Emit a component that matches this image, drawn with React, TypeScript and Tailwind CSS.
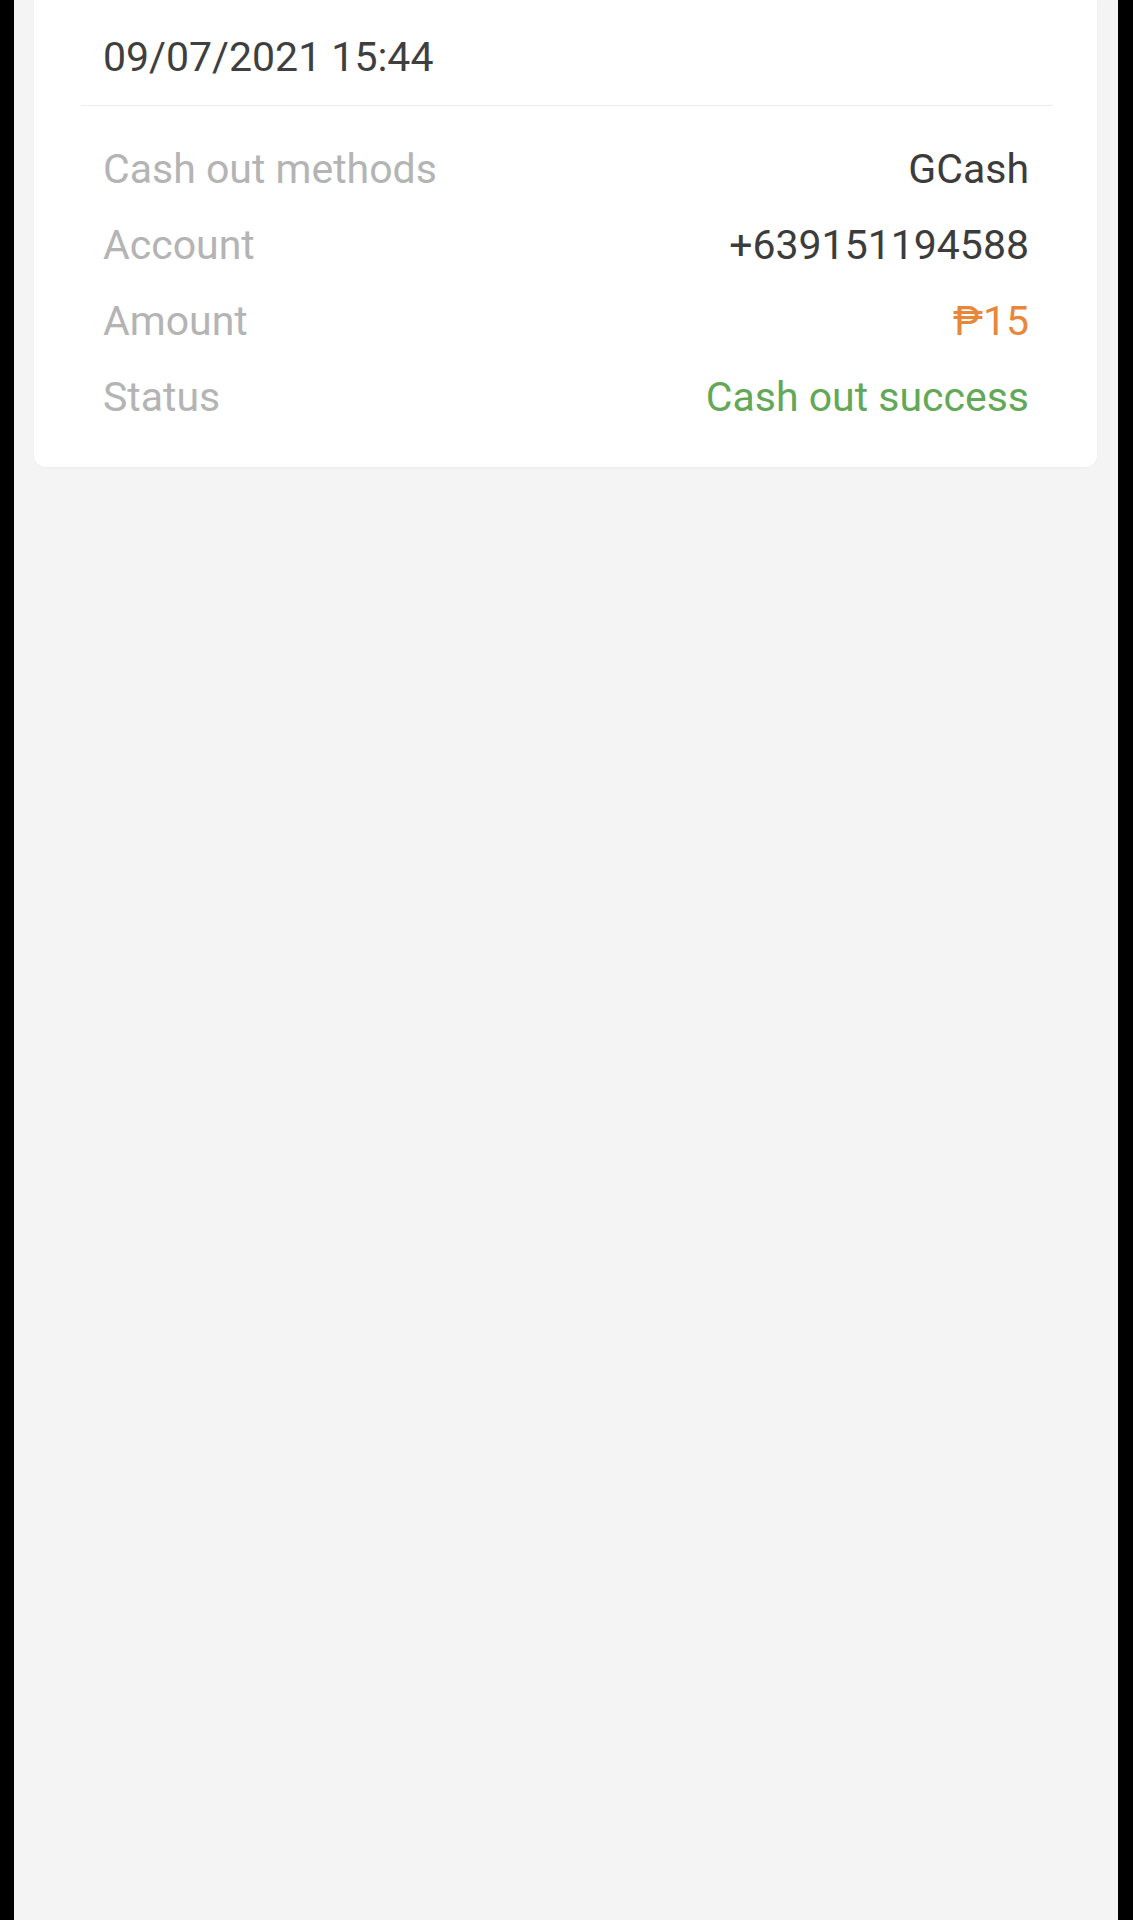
import React from "react";

const rows: { label: string; value: string; cls: string }[] = [
  { label: "Cash out methods", value: "GCash", cls: "text-[#3c3c3c]" },
  { label: "Account", value: "+639151194588", cls: "text-[#3c3c3c]" },
  { label: "Amount", value: "₱15", cls: "text-[#e8873a]" },
  { label: "Status", value: "Cash out success", cls: "text-[#62a857]" },
];

export default function App() {
  return (
    <div
      className="w-full h-[1920px] bg-black flex"
      style={{ fontFamily: "Roboto, 'Noto Sans', sans-serif" }}
    >
      <div className="ml-[14px] w-[1104px] h-full bg-[#f4f4f4] flex flex-col">
        <div className="ml-[20px] mr-[21px] bg-white rounded-b-[12px] pt-[33px] pb-[31px] shadow-[0_1px_2px_rgba(0,0,0,0.03)]">
          <div className="pl-[69px] h-[49px] leading-[49px] text-[41px] text-[#3f3f3f]">
            09/07/2021 15:44
          </div>
          <div className="mt-[23px] ml-[47px] mr-[44px] h-px bg-[#ececec]" />
          <div className="mt-[26px] flex flex-col">
            {rows.map((r) => (
              <div
                key={r.label}
                className="h-[76px] pl-[69px] pr-[68px] flex items-center justify-between text-[41px]"
              >
                <span className="text-[#b4b4b4]">{r.label}</span>
                <span className={r.cls}>{r.value}</span>
              </div>
            ))}
          </div>
        </div>
      </div>
    </div>
  );
}
